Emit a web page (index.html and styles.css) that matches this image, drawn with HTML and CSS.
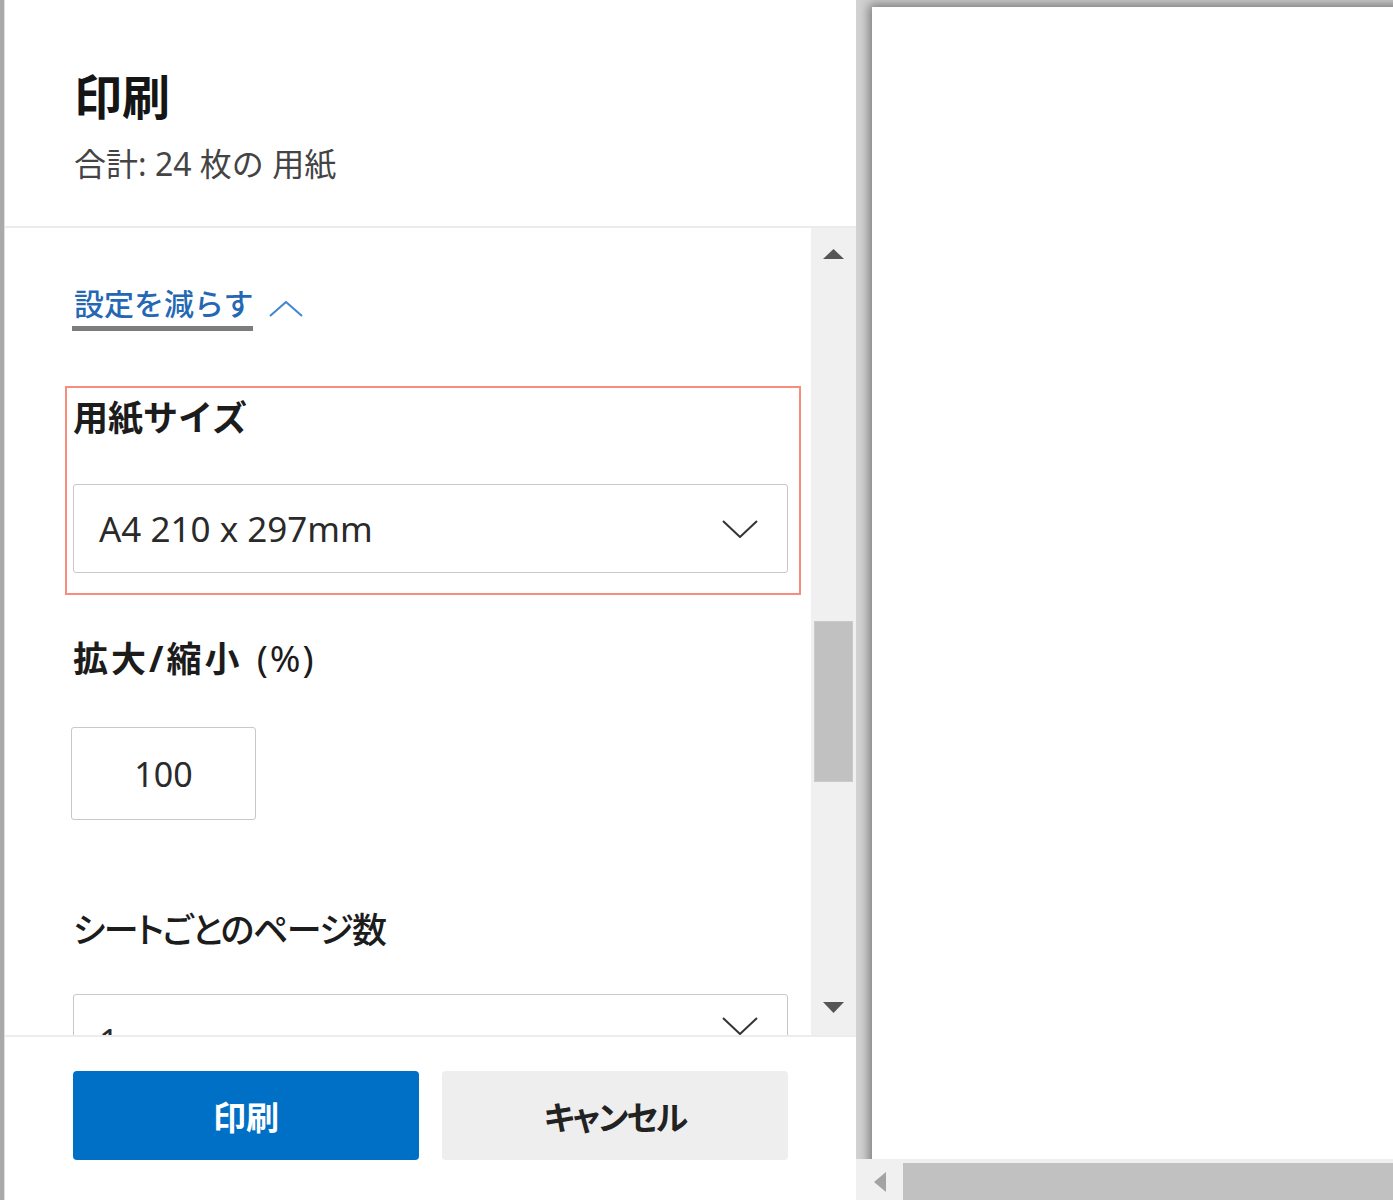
FILE: index.html
```html
<!DOCTYPE html>
<html lang="ja">
<head>
<meta charset="utf-8">
<title>印刷</title>
<link rel="stylesheet" href="styles.css">
</head>
<body>
<div class="app">
  <div class="edge"></div>
  <aside class="panel">
    <header class="head">
      <h1 class="title">印刷</h1>
      <p class="sub">合計: 24 枚の 用紙</p>
    </header>
    <div class="body">
      <div class="settings">
        <div class="toggle">
          <span class="toggle-text">設定を減らす</span>
          <svg class="chev-up" viewBox="0 0 34 16" width="34" height="16"><path d="M1 15 L17 1 L33 15" fill="none" stroke="#3f86cf" stroke-width="2"/></svg>
        </div>
        <section class="group highlight">
          <h2 class="label">用紙サイズ</h2>
          <div class="select">
            <span class="select-value">A4 210 x 297mm</span>
            <svg class="chev-down" viewBox="0 0 36 18" width="36" height="18"><path d="M1 1 L18 17 L35 1" fill="none" stroke="#333" stroke-width="2"/></svg>
          </div>
        </section>
        <section class="group scale">
          <h2 class="label wide">拡大/縮小 <span class="unit">(%)</span></h2>
          <div class="num">100</div>
        </section>
        <section class="group pages">
          <h2 class="label light">シートごとのページ数</h2>
          <div class="select">
            <span class="select-value">1</span>
            <svg class="chev-down" viewBox="0 0 36 18" width="36" height="18"><path d="M1 1 L18 17 L35 1" fill="none" stroke="#333" stroke-width="2"/></svg>
          </div>
        </section>
      </div>
      <div class="vscroll">
        <svg class="arrow" viewBox="0 0 21 10" width="21" height="10"><path d="M0 10 L10.5 0 L21 10 Z" fill="#555"/></svg>
        <div class="vthumb"></div>
        <svg class="arrow down" viewBox="0 0 21 11" width="21" height="11"><path d="M0 0 L21 0 L10.5 11 Z" fill="#555"/></svg>
      </div>
    </div>
    <footer class="foot">
      <button class="btn primary">印刷</button>
      <button class="btn secondary">キャンセル</button>
    </footer>
  </aside>
  <main class="preview">
    <div class="canvas">
      <div class="page"></div>
    </div>
    <div class="hscroll">
      <div class="harrow"><svg viewBox="0 0 12 20" width="12" height="20"><path d="M12 0 L12 20 L0 10 Z" fill="#a3a3a3"/></svg></div>
      <div class="hthumb"></div>
    </div>
  </main>
</div>
</body>
</html>
```

FILE: styles.css
```css
* { box-sizing: border-box; }
html, body { margin: 0; padding: 0; }
body {
  font-family: "Noto Sans", "Noto Sans CJK JP", sans-serif;
  color: #1f1f1f;
  background: #fff;
}
.app {
  display: flex;
  height: 1200px;
  overflow: hidden;
}
.edge {
  width: 5px;
  background: #a9a9a9;
  border-right: 1px solid #dedede;
  flex: none;
}
.panel {
  width: 851px;
  flex: none;
  display: flex;
  flex-direction: column;
  background: #fff;
}
.head {
  padding: 73px 0 46px 69px;
  border-bottom: 2px solid #ebebef;
}
.title {
  margin: 0;
  font-size: 48px;
  line-height: 1;
  font-weight: 700;
  color: #151515;
}
.sub {
  margin: 27px 0 0;
  font-size: 32px;
  line-height: 1;
  color: #444;
}
.body {
  flex: 1;
  min-height: 0;
  display: flex;
}
.settings {
  flex: 1;
  overflow: hidden;
  padding: 61px 23px 0 68px;
}
.toggle {
  display: flex;
  align-items: flex-start;
  gap: 16px;
}
.toggle-text {
  display: block;
  font-size: 30px;
  line-height: 30px;
  font-weight: 500;
  color: #2468b4;
  padding: 0 0 7px 2px;
  border-bottom: 5px solid #7d7d7d;
  margin-left: -1px;
}
.chev-up { margin-top: 12px; }
.group { display: block; }
.highlight {
  margin: 55px -13px 0 -8px;
  padding: 12px 11px 20px 6px;
  border: 2px solid #f88d7d;
}
.label {
  margin: 0;
  font-size: 35px;
  line-height: 1;
  font-weight: 700;
  color: #1c1c1c;
}
.label.wide { letter-spacing: 3px; height: 35px; }
.label .unit {
  font-weight: 400;
  font-size: 37px;
  line-height: 0;
  letter-spacing: 2px;
  margin-left: 2px;
}
.label.light {
  font-weight: 500;
  font-feature-settings: "palt";
  letter-spacing: -1.5px;
}
.select {
  margin-top: 49px;
  height: 89px;
  border: 1px solid #c8c8c8;
  border-radius: 3px;
  display: flex;
  align-items: center;
  justify-content: space-between;
  padding: 0 29px 0 25px;
}
.select-value {
  font-size: 35px;
  color: #2a2a2a;
}
.scale { margin-top: 46px; }
.num {
  margin: 51px 0 0 -2px;
  width: 185px;
  height: 93px;
  border: 1px solid #c8c8c8;
  border-radius: 3px;
  display: flex;
  align-items: center;
  justify-content: center;
  font-size: 34px;
  color: #2a2a2a;
}
.pages { margin-top: 92px; }
.pages .select { margin-top: 47px; align-items: flex-start; padding-top: 22px; }
.vscroll {
  width: 45px;
  flex: none;
  background: #f0f0f0;
  display: flex;
  flex-direction: column;
  align-items: center;
  padding: 21px 0 22px;
}
.vthumb {
  width: 39px;
  height: 161px;
  margin: 362px 1px 0 0;
  background: #c1c1c1;
  border: 1px solid #cacaca;
}
.arrow.down { margin-top: auto; }
.foot {
  height: 165px;
  flex: none;
  border-top: 2px solid #ececec;
  padding: 34px 68px 0 68px;
  display: flex;
  gap: 23px;
}
.btn {
  flex: 1;
  height: 89px;
  border: none;
  border-radius: 4px;
  font-family: "Noto Sans", "Noto Sans CJK JP", sans-serif;
  font-size: 33px;
  font-weight: 700;
}
.primary { background: #0070c6; color: #fff; }
.secondary {
  background: #eeeeee;
  color: #222;
  font-feature-settings: "palt";
  letter-spacing: -2px;
}
.preview {
  flex: 1;
  display: flex;
  flex-direction: column;
  min-width: 0;
}
.canvas {
  flex: 1;
  overflow: hidden;
  background: #d2d2d2;
  padding: 7px 0 0 16px;
}
.page {
  width: 1000px;
  height: 1300px;
  background: #fff;
  box-shadow: 0 0 10px 3px rgba(0,0,0,0.42);
}
.hscroll {
  height: 41px;
  flex: none;
  background: #f0f0f0;
  display: flex;
}
.harrow {
  width: 47px;
  display: flex;
  align-items: center;
  justify-content: center;
  padding-top: 4px;
}
.hthumb {
  flex: 1;
  margin-top: 4px;
  background: #c1c1c1;
}
```
